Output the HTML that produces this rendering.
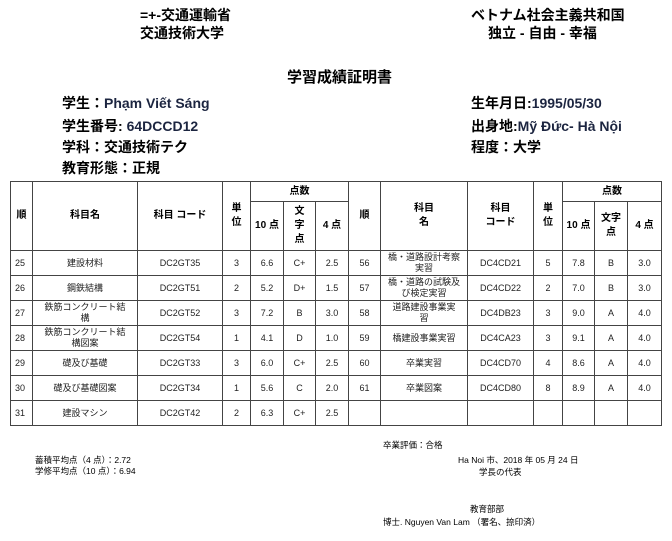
<!DOCTYPE html>
<html><head><meta charset="utf-8"><style>
*{margin:0;padding:0;box-sizing:border-box}
body{width:672px;height:541px;background:#fff;position:relative;overflow:hidden;font-family:"Liberation Sans","Noto Sans CJK JP",sans-serif;color:#000}
.a{position:absolute;white-space:nowrap}
.h{font-size:14px;font-weight:bold;line-height:17px}
.i{font-size:14px;font-weight:bold;line-height:18px}
.s{font-size:8.5px;line-height:11px}
.n{color:#1c2540}
table{position:absolute;left:10px;top:181px;border-collapse:collapse;table-layout:fixed;width:651px}
td{border:1px solid #444;font-size:9px;text-align:center;line-height:11px;padding:0;color:#222}
tr.r td{height:25px}
td.l{text-align:left;padding-left:4px}
th{border:1px solid #444;font-size:10px;font-weight:bold;line-height:14px;padding:0}
</style></head><body>
<div class="a h" style="left:140px;top:7px">=+-交通運輸省</div>
<div class="a h" style="left:140px;top:25px">交通技術大学</div>
<div class="a h" style="left:471px;top:7px">ベトナム社会主義共和国</div>
<div class="a h" style="left:488px;top:25px">独立 - 自由 - 幸福</div>
<div class="a h" style="left:287px;top:69px;font-size:15px">学習成績証明書</div>
<div class="a i" style="left:62px;top:94px">学生：<span class="n">Phạm Viết Sáng</span></div>
<div class="a i" style="left:62px;top:117px">学生番号: <span class="n">64DCCD12</span></div>
<div class="a i" style="left:62px;top:138px">学科：交通技術テク</div>
<div class="a i" style="left:62px;top:159px">教育形態：正規</div>
<div class="a i" style="left:471px;top:94px">生年月日:<span class="n">1995/05/30</span></div>
<div class="a i" style="left:471px;top:117px">出身地:<span class="n">Mỹ Đức- Hà Nội</span></div>
<div class="a i" style="left:471px;top:138px">程度：大学</div>
<table>
<colgroup><col style="width:22px"><col style="width:105px"><col style="width:85px"><col style="width:28px"><col style="width:33px"><col style="width:32px"><col style="width:33px"><col style="width:32px"><col style="width:87px"><col style="width:66px"><col style="width:29px"><col style="width:32px"><col style="width:33px"><col style="width:34px"></colgroup>
<tr style="height:20px"><th rowspan="2">順</th><th rowspan="2">科目名</th><th rowspan="2">科目 コード</th><th rowspan="2">単<br>位</th><th colspan="3">点数</th><th rowspan="2">順</th><th rowspan="2">科目<br>名</th><th rowspan="2">科目<br>コード</th><th rowspan="2">単<br>位</th><th colspan="3">点数</th></tr>
<tr style="height:49px"><th>10 点</th><th>文<br>字<br>点</th><th>4 点</th><th>10 点</th><th>文字<br>点</th><th>4 点</th></tr>
<tr class="r"><td class="l">25</td><td>建設材料</td><td>DC2GT35</td><td>3</td><td>6.6</td><td>C+</td><td>2.5</td><td>56</td><td>橋・道路設計考察<br>実習</td><td>DC4CD21</td><td>5</td><td>7.8</td><td>B</td><td>3.0</td></tr>
<tr class="r"><td class="l">26</td><td>鋼鉄結構</td><td>DC2GT51</td><td>2</td><td>5.2</td><td>D+</td><td>1.5</td><td>57</td><td>橋・道路の試験及<br>び検定実習</td><td>DC4CD22</td><td>2</td><td>7.0</td><td>B</td><td>3.0</td></tr>
<tr class="r"><td class="l">27</td><td>鉄筋コンクリート結<br>構</td><td>DC2GT52</td><td>3</td><td>7.2</td><td>B</td><td>3.0</td><td>58</td><td>道路建設事業実<br>習</td><td>DC4DB23</td><td>3</td><td>9.0</td><td>A</td><td>4.0</td></tr>
<tr class="r"><td class="l">28</td><td>鉄筋コンクリート結<br>構図案</td><td>DC2GT54</td><td>1</td><td>4.1</td><td>D</td><td>1.0</td><td>59</td><td>橋建設事業実習</td><td>DC4CA23</td><td>3</td><td>9.1</td><td>A</td><td>4.0</td></tr>
<tr class="r"><td class="l">29</td><td>礎及び基礎</td><td>DC2GT33</td><td>3</td><td>6.0</td><td>C+</td><td>2.5</td><td>60</td><td>卒業実習</td><td>DC4CD70</td><td>4</td><td>8.6</td><td>A</td><td>4.0</td></tr>
<tr class="r"><td class="l">30</td><td>礎及び基礎図案</td><td>DC2GT34</td><td>1</td><td>5.6</td><td>C</td><td>2.0</td><td>61</td><td>卒業図案</td><td>DC4CD80</td><td>8</td><td>8.9</td><td>A</td><td>4.0</td></tr>
<tr class="r"><td class="l">31</td><td>建設マシン</td><td>DC2GT42</td><td>2</td><td>6.3</td><td>C+</td><td>2.5</td><td></td><td></td><td></td><td></td><td></td><td></td><td></td></tr>
</table>
<div class="a s" style="left:383px;top:440px">卒業評価：合格</div>
<div class="a s" style="left:35px;top:455px">蓄積平均点（4 点）：2.72</div>
<div class="a s" style="left:35px;top:466px">学修平均点（10 点）：6.94</div>
<div class="a s" style="left:458px;top:455px">Ha Noi 市、2018 年 05 月 24 日</div>
<div class="a s" style="left:479px;top:467px">学長の代表</div>
<div class="a s" style="left:470px;top:504px">教育部部</div>
<div class="a s" style="left:383px;top:517px">博士.  Nguyen Van Lam （署名、捺印済）</div>
</body></html>
